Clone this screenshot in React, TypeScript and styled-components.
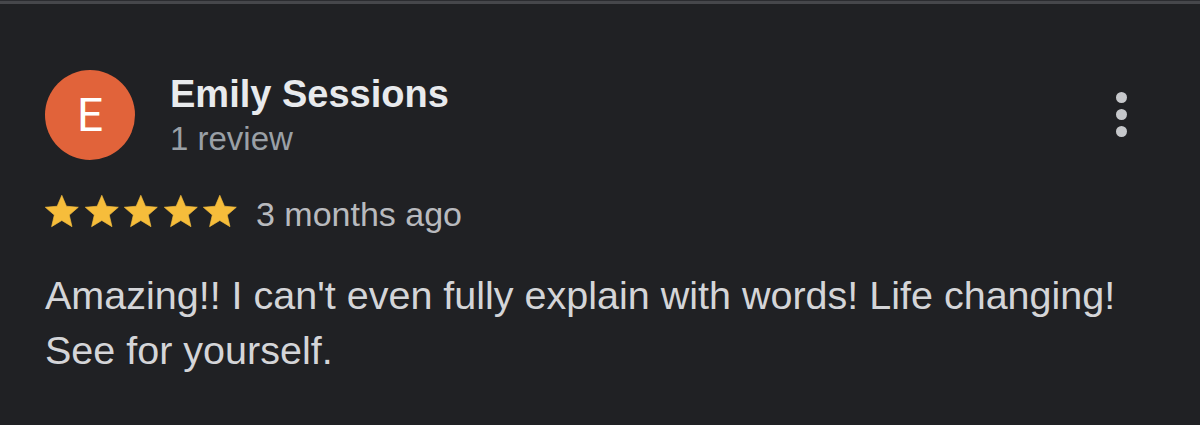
import React from "react";
import styled, { createGlobalStyle } from "styled-components";

const GlobalStyle = createGlobalStyle`
  html, body {
    margin: 0;
    padding: 0;
    background: #202124;
  }
  * { box-sizing: border-box; }
`;

const Page = styled.div`
  width: 1200px;
  height: 425px;
  background: #202124;
  border-top: 1px solid #2b2c30;
  font-family: "Liberation Sans", Arial, Helvetica, sans-serif;
  overflow: hidden;
`;

const TopRule = styled.div`
  height: 3px;
  background: #46474b;
`;

const Card = styled.article`
  padding: 66px 45px 0 45px;
  display: flex;
  flex-direction: column;
`;

const Header = styled.header`
  display: flex;
  align-items: flex-start;
`;

const Avatar = styled.div<{ $bg: string }>`
  width: 90px;
  height: 90px;
  border-radius: 50%;
  background: ${(p) => p.$bg};
  color: #ffffff;
  display: flex;
  align-items: center;
  justify-content: center;
  font-family: Roboto, "Liberation Sans", sans-serif;
  font-size: 46px;
  font-weight: 400;
  flex-shrink: 0;
`;

const Who = styled.div`
  margin-left: 35px;
  margin-top: 2px;
  flex: 1;
  display: flex;
  flex-direction: column;
  gap: 3px;
`;

const Name = styled.div`
  font-size: 38px;
  line-height: 44px;
  font-weight: 700;
  color: #e8eaed;
`;

const Count = styled.div`
  font-size: 33px;
  line-height: 40px;
  color: #9aa0a6;
`;

const MenuButton = styled.button`
  margin-top: 22px;
  margin-right: 28px;
  padding: 0;
  border: none;
  background: transparent;
  display: flex;
  flex-direction: column;
  gap: 6px;
  cursor: pointer;
`;

const Dot = styled.span`
  width: 11px;
  height: 11px;
  border-radius: 50%;
  background: #c6c8cb;
`;

const RatingRow = styled.div`
  margin-top: 32px;
  margin-left: -3px;
  display: flex;
  align-items: flex-start;
`;

const Stars = styled.div`
  display: flex;
`;

const Ago = styled.span`
  margin-left: 16px;
  margin-top: 1.5px;
  font-size: 34px;
  line-height: 40px;
  color: #b8babe;
`;

const Body = styled.p`
  margin: 34px 0 0 0;
  font-size: 39.5px;
  line-height: 55px;
  color: #d4d5d8;
`;

const Star = () => (
  <svg width="39.6" height="39.6" viewBox="0 0 24 24">
    <path
      d="M12 17.27L18.18 21l-1.64-7.03L22 9.24l-7.19-.61L12 2 9.19 8.63 2 9.24l5.46 4.73L5.82 21z"
      fill="#f6bd3b"
      stroke="#f6bd3b"
      strokeWidth="0.4"
      strokeLinejoin="round"
    />
  </svg>
);

export default function App() {
  return (
    <>
      <GlobalStyle />
      <Page>
        <TopRule />
        <Card>
          <Header>
            <Avatar $bg="#e1633a">E</Avatar>
            <Who>
              <Name>Emily Sessions</Name>
              <Count>1 review</Count>
            </Who>
            <MenuButton aria-label="More options">
              <Dot />
              <Dot />
              <Dot />
            </MenuButton>
          </Header>
          <RatingRow>
            <Stars>
              {[0, 1, 2, 3, 4].map((i) => (
                <Star key={i} />
              ))}
            </Stars>
            <Ago>3 months ago</Ago>
          </RatingRow>
          <Body>
            Amazing!! I can't even fully explain with words! Life changing! See for yourself.
          </Body>
        </Card>
      </Page>
    </>
  );
}
